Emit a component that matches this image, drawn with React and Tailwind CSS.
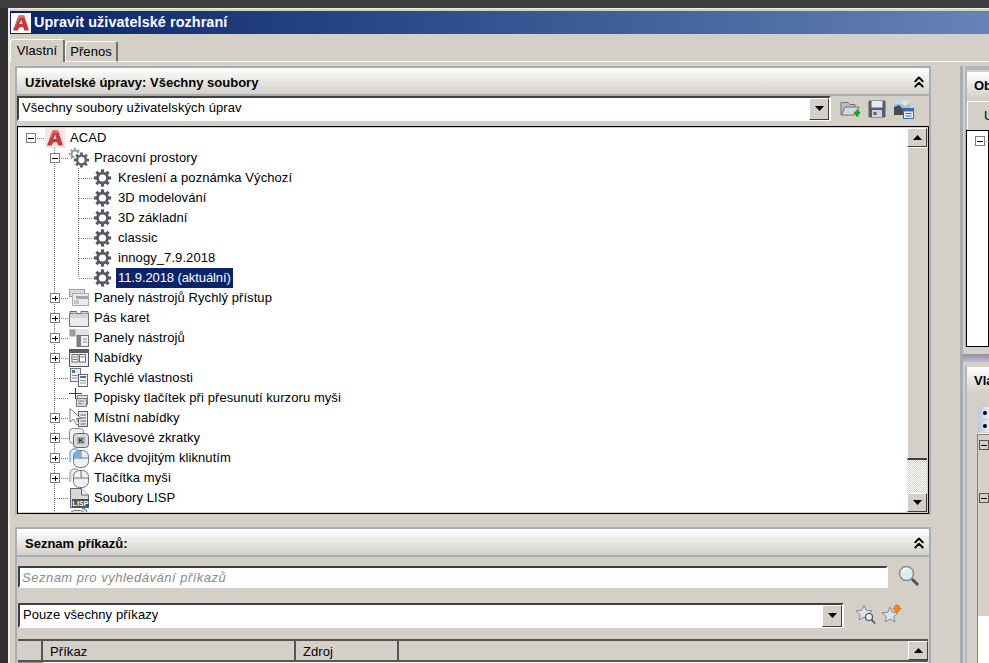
import { ChevronsUp } from 'lucide-react';

// ---- small drawings ----
function AcadLogo({ bg = '#f8e4e3' }) {
  return (
    <svg viewBox="0 0 20 20" className="h-5 w-5 shrink-0">
      <rect width="20" height="20" fill={bg} />
      <path d="M7.5 2.5H13L18 17.5H13.2L12.2 14.3H8.4L6.6 17.5H2Z" fill="#c23a3d" />
      <path d="M10.3 6.5L11.6 11H8.2Z" fill="#f7dcda" />
      <path d="M7.5 2.5H13L13.8 5H9L3.5 15Z" fill="#dc6c6e" />
    </svg>
  );
}

function GearShape({ cx, cy, r, color }) {
  const angles = [0, 45, 90, 135, 180, 225, 270, 315];
  return (
    <g>
      {angles.map((a) => (
        <rect key={a} x={cx - r * 0.2} y={cy - r * 1.08} width={r * 0.4} height={r * 0.5} fill={color} transform={`rotate(${a} ${cx} ${cy})`} />
      ))}
      <circle cx={cx} cy={cy} r={r * 0.62} fill="none" stroke={color} strokeWidth={r * 0.34} />
    </g>
  );
}

function Gear() {
  return (
    <svg viewBox="0 0 20 20" className="h-5 w-5 shrink-0">
      <GearShape cx={9.5} cy={10} r={8} color="#565b62" />
    </svg>
  );
}

function Gears() {
  return (
    <svg viewBox="0 0 20 20" className="h-5 w-5 shrink-0">
      <GearShape cx={6} cy={6} r={5.5} color="#9a9da2" />
      <circle cx="12.5" cy="12" r="7.6" fill="#fff" />
      <GearShape cx={12.5} cy={12} r={7} color="#5c6066" />
    </svg>
  );
}

function QuickToolbarIcon() {
  return (
    <svg viewBox="0 0 20 20" className="h-5 w-5 shrink-0">
      <rect x="0.5" y="1.5" width="15" height="7" fill="#d6d8db" stroke="#9a9ea3" />
      <rect x="3.5" y="5.5" width="16" height="12" fill="#e9eaeb" stroke="#a8abaf" />
      <rect x="7" y="8" width="12" height="3" fill="#a2a5aa" />
      <rect x="5" y="12" width="5" height="4" fill="#c3c6c9" />
    </svg>
  );
}

function RibbonIcon() {
  return (
    <svg viewBox="0 0 20 20" className="h-5 w-5 shrink-0">
      <path d="M0.5 5.5H19.5V18.5H0.5Z" fill="#ececee" stroke="#6f7378" />
      <path d="M1 5V3.5H7.5V5.5M12 5.5V3.5H19V5.5" fill="#cfd1d4" stroke="#6f7378" />
      <rect x="1" y="6" width="18" height="4" fill="#d4d6d8" />
    </svg>
  );
}

function ToolbarsIcon() {
  return (
    <svg viewBox="0 0 20 20" className="h-5 w-5 shrink-0">
      <rect x="0" y="1" width="20" height="6" fill="#e2e3e5" />
      <rect x="0.5" y="1.5" width="6" height="7" fill="#9a9ea3" />
      <rect x="8" y="7.5" width="11.5" height="11" fill="#f0f0f1" stroke="#70747a" />
      <rect x="8" y="8" width="4" height="10" fill="#7d8186" />
      <path d="M14 11H18M14 14H18" stroke="#85898e" />
    </svg>
  );
}

function MenusIcon() {
  return (
    <svg viewBox="0 0 20 20" className="h-5 w-5 shrink-0">
      <rect x="0.5" y="1.5" width="19" height="17" fill="#eceded" stroke="#53575c" />
      <rect x="1" y="2" width="18" height="3" fill="#5b5f64" />
      <rect x="3" y="6.5" width="6" height="7.5" fill="#fff" stroke="#6d7176" />
      <rect x="10.5" y="6.5" width="6" height="7.5" fill="#fff" stroke="#6d7176" />
      <path d="M4 9H8M4 11.5H8M11.5 9H15.5" stroke="#6d7176" />
    </svg>
  );
}

function PropsIcon() {
  return (
    <svg viewBox="0 0 20 20" className="h-5 w-5 shrink-0">
      <rect x="1.5" y="0.5" width="10" height="13" fill="#eef0f2" stroke="#73777c" />
      <rect x="3" y="2" width="3" height="3" fill="#3f76b5" />
      <path d="M3 7.5H10M3 10H9" stroke="#8f9398" />
      <rect x="9.5" y="6.5" width="9" height="12" fill="#f6f6f7" stroke="#64686d" />
      <rect x="11" y="8" width="6" height="2" fill="#3f76b5" />
      <path d="M11 12.5H17M11 15H17" stroke="#8f9398" />
    </svg>
  );
}

function TooltipIcon() {
  return (
    <svg viewBox="0 0 20 20" className="h-5 w-5 shrink-0">
      <path d="M6.5 -1V11M0 5.5H13" stroke="#33363a" />
      <rect x="8.5" y="7.5" width="10" height="9" fill="#e2e3e5" stroke="#7b7f84" />
      <rect x="7.5" y="10.5" width="10" height="8" fill="#d3d5d8" stroke="#7b7f84" />
      <path d="M9.5 13H15M9.5 15.5H13" stroke="#85898e" />
    </svg>
  );
}

function ContextIcon() {
  return (
    <svg viewBox="0 0 20 20" className="h-5 w-5 shrink-0">
      <rect x="9.5" y="3.5" width="9" height="15" fill="#e8e9ea" stroke="#5a5e63" />
      <path d="M11.5 7H17M11.5 10H17M11.5 13H17M11.5 16H17" stroke="#5a5e63" />
      <path d="M1 0.5V14L4.5 11L7.5 17L10 16L7.5 10.5H12Z" fill="#fff" stroke="#73777c" />
    </svg>
  );
}

function KeyboardIcon() {
  return (
    <svg viewBox="0 0 20 20" className="h-5 w-5 shrink-0">
      <rect x="0.5" y="0.5" width="14" height="15" rx="3" fill="#eef0f1" stroke="#888c91" />
      <rect x="4.5" y="5.5" width="15" height="14" rx="3" fill="#d6d8db" stroke="#63676c" />
      <rect x="8" y="9" width="8" height="7" fill="#a9acb0" />
      <text x="12" y="15" fontSize="7" fontWeight="700" textAnchor="middle" fill="#2e3135" fontFamily="Liberation Sans">K</text>
    </svg>
  );
}

function MouseIcon({ blue }) {
  return (
    <svg viewBox="0 0 20 20" className="h-5 w-5 shrink-0">
      <path d="M1 14V5C1 2.5 3 0.8 6 0.8C8 0.8 9 1.5 9.5 2.5" fill="#e9ebed" stroke={blue ? '#3f8fd6' : '#8a8e93'} />
      <rect x="4.5" y="2.5" width="15" height="17" rx="6" fill="#eef0f1" stroke="#70747a" />
      <path d="M4.5 10H19.5M12 2.5V10" stroke="#70747a" />
      {blue ? <path d="M5 9.5V8C5 5 7 3 11.5 3V9.5Z" fill="#6fb1e6" /> : null}
    </svg>
  );
}

function LispIcon() {
  return (
    <svg viewBox="0 0 20 20" className="h-5 w-5 shrink-0">
      <path d="M1.5 0.5H12.5L19.5 7V19.5H1.5Z" fill="#d5d7da" stroke="#63676c" />
      <path d="M12.5 0.5V7H19.5" fill="#f1f1f2" stroke="#63676c" />
      <rect x="3" y="11" width="17" height="8.5" fill="#4d5156" />
      <text x="11.5" y="18" fontSize="7" fontWeight="700" textAnchor="middle" fill="#fff" fontFamily="Liberation Sans">LISP</text>
    </svg>
  );
}

function LegacyIcon() {
  return (
    <svg viewBox="0 0 20 20" className="h-5 w-5 shrink-0">
      <rect x="1.5" y="2.5" width="14" height="14" rx="4" fill="#e6e7e9" stroke="#70747a" />
      <path d="M13 0.5A5 5 0 0 1 18 5" fill="none" stroke="#3f8fd6" strokeWidth="1.5" />
    </svg>
  );
}

function FolderPlus() {
  return (
    <svg viewBox="0 0 20 20" className="h-5 w-5">
      <path d="M1 16V3.5H8L10 5.5H15V8" fill="#b8bec6" stroke="#6b7178" />
      <path d="M1.5 16L5 8H19L15 16Z" fill="#d5d9de" stroke="#6b7178" />
      <path d="M14 12.5H16.5V10.5H18.5V12.5H20.5V15H18.5V17.5H16V15H14Z" fill="#13a313" />
    </svg>
  );
}

function SaveIcon() {
  return (
    <svg viewBox="0 0 18 18" className="h-[18px] w-[18px]">
      <path d="M1.5 0.5H16.5L17.5 1.5V16.5L16.5 17.5H1.5L0.5 16.5V1.5Z" fill="#565d6b" />
      <rect x="3.5" y="1" width="11" height="6.5" fill="#e9eaec" />
      <rect x="4" y="10" width="10" height="7" fill="#d0d3d8" />
      <rect x="5.5" y="12" width="3" height="3" fill="#565d6b" />
    </svg>
  );
}

function SaveAsIcon() {
  return (
    <svg viewBox="0 0 20 20" className="h-5 w-5">
      <rect x="0" y="0" width="16" height="16" fill="#a3c3e6" />
      <rect x="0" y="0" width="16" height="5" fill="#c3d8ef" />
      <circle cx="11" cy="4" r="2.5" fill="#f6e9a8" />
      <path d="M0 16V8L5 6L10 11V16Z" fill="#474c54" />
      <rect x="9.5" y="9.5" width="10" height="10" fill="#e8eef6" stroke="#2f6fb3" />
      <rect x="10" y="10" width="9" height="2.5" fill="#2f6fb3" />
      <path d="M11.5 14.5H17.5M11.5 17H17.5" stroke="#2f6fb3" />
    </svg>
  );
}

function Magnifier() {
  return (
    <svg viewBox="0 0 22 22" className="h-[22px] w-[22px] shrink-0">
      <circle cx="8.5" cy="8.5" r="7" fill="#dcecee" stroke="#8b9094" strokeWidth="1.6" />
      <path d="M4 7C5 4.5 7 3.5 9.5 3.5" fill="none" stroke="#fff" strokeWidth="1.5" />
      <path d="M14 14L20 20" stroke="#4d5156" strokeWidth="3" />
    </svg>
  );
}

function StarSearch() {
  return (
    <svg viewBox="0 0 21 21" className="h-[21px] w-[21px] shrink-0">
      <path d="M8 1L10.3 6.3L16 6.8L11.7 10.6L13 16L8 13.2L3 16L4.3 10.6L0 6.8L5.7 6.3Z" fill="#dde0e4" stroke="#888c91" />
      <circle cx="13" cy="13" r="3.5" fill="#e9eef0" stroke="#50545a" strokeWidth="1.2" />
      <path d="M15.5 15.5L19 19.5" stroke="#50545a" strokeWidth="1.8" />
    </svg>
  );
}

function StarNew() {
  return (
    <svg viewBox="0 0 21 21" className="h-[21px] w-[21px] shrink-0">
      <path d="M8 3L10.3 8.3L16 8.8L11.7 12.6L13 18L8 15.2L3 18L4.3 12.6L0 8.8L5.7 8.3Z" fill="#dde0e4" stroke="#888c91" />
      <circle cx="15" cy="4.5" r="3" fill="#f4a020" stroke="#e2630c" />
      <path d="M15 0V9M10.5 4.5H19.5" stroke="#ee7a12" />
    </svg>
  );
}

function Triangle({ up }) {
  return (
    <svg viewBox="0 0 9 5" className="h-[5px] w-[9px]">
      <path d={up ? 'M4.5 0L9 5H0Z' : 'M0 0H9L4.5 5Z'} fill="#000" />
    </svg>
  );
}

// tree connector: one 20px high cell of dotted lines with optional +/- box
function Connector({ up, down, through, across, box, width = 24 }) {
  return (
    <svg width={width} height="20" className="shrink-0" shapeRendering="crispEdges">
      {(through || up) && <path d="M11.5 0V10" stroke="#777" strokeDasharray="1 1" />}
      {(through || down) && <path d="M11.5 10V20" stroke="#777" strokeDasharray="1 1" />}
      {across && <path d={`M12 10.5H${width}`} stroke="#777" strokeDasharray="1 1" />}
      {box && (
        <g>
          <rect x="7.5" y="5.5" width="9" height="9" fill="#fff" stroke="#7d7d7d" />
          <path d="M9 10.5H15" stroke="#000" />
          {box === 'plus' && <path d="M12 8V13" stroke="#000" />}
        </g>
      )}
    </svg>
  );
}

// ---- shared chrome ----
function BevelButton({ children, className = '' }) {
  return (
    <div className={`flex shrink-0 items-center justify-center border border-t-white border-l-white border-r-[#404040] border-b-[#404040] bg-[#d4d0c8] ${className}`}>
      {children}
    </div>
  );
}

function PanelHeader({ title }) {
  return (
    <div className="flex h-[28px] shrink-0 items-center justify-between border-b-2 border-[#a5adb6] bg-gradient-to-b from-white to-[#d4d0c8] pl-2 pr-px pt-[2px]">
      <span className="text-[13px] font-bold tracking-normal">{title}</span>
      <ChevronsUp size={18} strokeWidth={2.4} color="#000" />
    </div>
  );
}

function Combo({ label, className = '' }) {
  return (
    <div className={`flex h-[25px] items-center justify-between border-2 border-t-[#404040] border-l-[#404040] border-r-white border-b-white bg-white ${className}`}>
      <span className="truncate pb-[2px]">{label}</span>
      <BevelButton className="h-[22px] w-[20px]">
        <Triangle />
      </BevelButton>
    </div>
  );
}

const treeRows = [
  { level: 0, box: 'minus', icon: <AcadLogo />, label: 'ACAD' },
  { level: 1, box: 'minus', icon: <Gears />, label: 'Pracovní prostory' },
  { level: 2, icon: <Gear />, label: 'Kreslení a poznámka Výchozí' },
  { level: 2, icon: <Gear />, label: '3D modelování' },
  { level: 2, icon: <Gear />, label: '3D základní' },
  { level: 2, icon: <Gear />, label: 'classic' },
  { level: 2, icon: <Gear />, label: 'innogy_7.9.2018' },
  { level: 2, icon: <Gear />, label: '11.9.2018 (aktuální)', selected: true, last: true },
  { level: 1, box: 'plus', icon: <QuickToolbarIcon />, label: 'Panely nástrojů Rychlý přístup' },
  { level: 1, box: 'plus', icon: <RibbonIcon />, label: 'Pás karet' },
  { level: 1, box: 'plus', icon: <ToolbarsIcon />, label: 'Panely nástrojů' },
  { level: 1, box: 'plus', icon: <MenusIcon />, label: 'Nabídky' },
  { level: 1, icon: <PropsIcon />, label: 'Rychlé vlastnosti' },
  { level: 1, icon: <TooltipIcon />, label: 'Popisky tlačítek při přesunutí kurzoru myši' },
  { level: 1, box: 'plus', icon: <ContextIcon />, label: 'Místní nabídky' },
  { level: 1, box: 'plus', icon: <KeyboardIcon />, label: 'Klávesové zkratky' },
  { level: 1, box: 'plus', icon: <MouseIcon blue />, label: 'Akce dvojitým kliknutím' },
  { level: 1, box: 'plus', icon: <MouseIcon />, label: 'Tlačítka myši' },
  { level: 1, icon: <LispIcon />, label: 'Soubory LISP' },
  { level: 1, box: 'plus', icon: <LegacyIcon />, label: 'Starší' },
];

function TreeRow({ row }) {
  return (
    <div className="flex h-5 shrink-0 items-center">
      {row.level === 0 && <Connector across box={row.box} width={26} />}
      {row.level === 1 && (
        <>
          <div className="w-6 shrink-0" />
          <Connector through across box={row.box} width={26} />
        </>
      )}
      {row.level === 2 && (
        <>
          <div className="w-6 shrink-0" />
          <Connector through />
          <Connector up down={!row.last} across width={26} />
        </>
      )}
      {row.icon}
      <span className={`ml-[3px] flex h-5 items-center whitespace-nowrap px-[2px] pb-[2px] ${row.selected ? 'bg-[#0a246a] text-white tracking-[-0.1px]' : ''}`}>
        {row.label}
      </span>
    </div>
  );
}

function VerticalScrollbar() {
  return (
    <div className="flex w-[20px] shrink-0 flex-col">
      <BevelButton className="h-[19px]">
        <Triangle up />
      </BevelButton>
      <div className="h-[313px] border-t border-l border-t-white border-l-white border-b-2 border-b-[#404040] bg-[#d4d0c8]" />
      <div className="flex-1 bg-[repeating-conic-gradient(#ffffff_0_25%,#d4d0c8_0_50%)] bg-[length:2px_2px]" />
      <BevelButton className="h-[19px]">
        <Triangle />
      </BevelButton>
    </div>
  );
}

function RadioStub() {
  return (
    <div className="flex h-3 items-center bg-gradient-to-r from-[#b9c6dc] to-[#eceef2] pl-[5px]">
      <div className="h-[4px] w-[4px] rounded-full bg-black" />
    </div>
  );
}

function MinusStub({ className = '' }) {
  return (
    <div className={`flex h-[10px] w-[10px] items-center justify-center border border-[#555] ${className}`}>
      <div className="h-px w-[6px] bg-black" />
    </div>
  );
}

export default function App() {
  return (
    <div className="flex h-[663px] w-[989px] flex-col overflow-hidden bg-[#d4d0c8] font-['Liberation_Sans',sans-serif] text-[13px] leading-none tracking-[0.08px] text-black">
      <div className="h-[8px] shrink-0 bg-[#3d3d3d]" />
      <div className="flex min-h-0 flex-1">
        <div className="w-[8px] shrink-0 bg-[#2f2f2f]" />
        <div className="flex min-w-0 flex-1 flex-col border-l-2 border-t border-l-[#efece6] border-t-[#efece6]">
          {/* title bar */}
          <div className="mt-[2px] flex h-[23px] shrink-0 items-center gap-[3px] bg-gradient-to-r from-[#0a246a] to-[#6583b7] pl-px">
            <AcadLogo bg="#ffffff" />
            <span className="text-[14.4px] font-bold text-white">Upravit uživatelské rozhraní</span>
          </div>

          {/* tabs */}
          <div className="flex h-[28px] shrink-0 items-end">
            <div className="flex h-[23px] w-[55px] items-center justify-center rounded-t-[3px] border-l border-t border-r-2 border-l-white border-t-white border-r-[#707070] pb-[2px]">
              Vlastní
            </div>
            <div className="flex h-[21px] w-[53px] items-center justify-center rounded-t-[3px] border-l border-t border-b border-r-2 border-white border-r-[#707070]">
              Přenos
            </div>
            <div className="flex-1 border-b border-white" />
          </div>

          <div className="flex min-h-0 flex-1 pt-[4px]">
            {/* left column */}
            <div className="ml-[5px] flex w-[916px] shrink-0 flex-col">
              <section className="flex h-[449px] shrink-0 flex-col border-2 border-b-0 border-[#a5adb6]">
                <PanelHeader title="Uživatelské úpravy: Všechny soubory" />
                <div className="flex h-[25px] shrink-0 items-center">
                  <Combo label="Všechny soubory uživatelských úprav" className="w-[814px] pl-[3px]" />
                  <div className="ml-[9px] flex items-center gap-[8px]">
                    <FolderPlus />
                    <SaveIcon />
                    <SaveAsIcon />
                  </div>
                </div>
                <div className="mt-[5px] flex h-[388px] shrink-0 border border-black pt-px pb-px pr-px">
                  <div className="flex min-w-0 flex-1 flex-col overflow-hidden bg-white pl-px">
                    {treeRows.map((row) => (
                      <TreeRow key={row.label} row={row} />
                    ))}
                  </div>
                  <VerticalScrollbar />
                </div>
              </section>

              <section className="mt-[12px] flex min-h-0 flex-1 flex-col border-2 border-b-0 border-[#a5adb6]">
                <PanelHeader title="Seznam příkazů:" />
                <div className="mt-[9px] flex shrink-0 items-center">
                  <div className="ml-px flex h-[22px] w-[870px] items-center border-2 border-t-[#404040] border-l-[#404040] border-r-white border-b-white bg-white pl-[2px] italic tracking-[0.5px] text-[#8a8a8a]">
                    Seznam pro vyhledávání příkazů
                  </div>
                  <div className="ml-[10px] -mt-[2px]">
                    <Magnifier />
                  </div>
                </div>
                <div className="mt-[15px] flex shrink-0 items-center">
                  <Combo label="Pouze všechny příkazy" className="ml-px w-[826px] pl-[3px]" />
                  <div className="ml-[12px] -mt-[3px] flex gap-[5px]">
                    <StarSearch />
                    <StarNew />
                  </div>
                </div>
                <div className="ml-px mr-px mt-[11px] flex h-[23px] shrink-0 border-y-2 border-[#555]">
                  <div className="w-[25px] shrink-0 border-r-2 border-[#555]" />
                  <div className="flex w-[253px] shrink-0 items-center border-r-2 border-[#555] pl-[7px] pt-px">Příkaz</div>
                  <div className="flex w-[103px] shrink-0 items-center border-r-2 border-[#555] pl-[7px] pt-px">Zdroj</div>
                  <div className="flex-1" />
                  <BevelButton className="h-[19px] w-[20px]">
                    <Triangle up />
                  </BevelButton>
                </div>
                <div className="ml-px mr-px flex min-h-0 flex-1">
                  <div className="w-[25px] shrink-0 bg-[#8e8e8e]" />
                  <div className="flex-1 bg-white" />
                  <div className="w-[20px] shrink-0 border-t border-white" />
                </div>
              </section>
            </div>

            {/* right column, runs off the edge of the picture */}
            <div className="ml-[29px] flex min-w-0 flex-1 flex-col overflow-hidden whitespace-nowrap border-l-[3px] border-[#a5adb6]">
              <section className="ml-[2px] flex h-[281px] shrink-0 flex-col border-2 border-r-0 border-b-0 border-[#b0b7bf] border-t-[4px] pt-[2px]">
                <div className="flex h-[27px] shrink-0 items-center bg-gradient-to-b from-white to-[#d4d0c8] pl-[7px] text-[13px] font-bold tracking-normal">
                  Obsah pracovního prostoru
                </div>
                <div className="mt-[2px] flex h-[28px] shrink-0 items-center border-t border-l border-white pl-[16px]">Upravit</div>
                <div className="-ml-px mt-px flex flex-1 border border-black bg-white pl-[1px]">
                  <Connector box="minus" across />
                </div>
              </section>
              <div className="mt-[7px] h-[8px] shrink-0 bg-gradient-to-b from-[#8f8fa5] to-[#c0c0cc]" />
              <section className="ml-[2px] mt-[4px] flex min-h-0 flex-1 flex-col border-l-2 border-[#b0b7bf]">
                <div className="mt-px flex h-[26px] shrink-0 items-center bg-gradient-to-b from-white to-[#d4d0c8] pl-[7px] text-[13px] font-bold tracking-normal">
                  Vlastnosti
                </div>
                <div className="ml-[11px] mt-[14px] flex h-[27px] flex-col gap-px border-b border-white">
                  <RadioStub />
                  <RadioStub />
                </div>
                <div className="ml-[10px] h-[182px] shrink-0 border-l border-t border-[#808080] pl-px pt-[5px]">
                  <MinusStub />
                  <MinusStub className="mt-[43px]" />
                </div>
                <div className="ml-[10px] flex-1 border-l border-[#808080] bg-white" />
              </section>
            </div>
          </div>
        </div>
      </div>
    </div>
  );
}
